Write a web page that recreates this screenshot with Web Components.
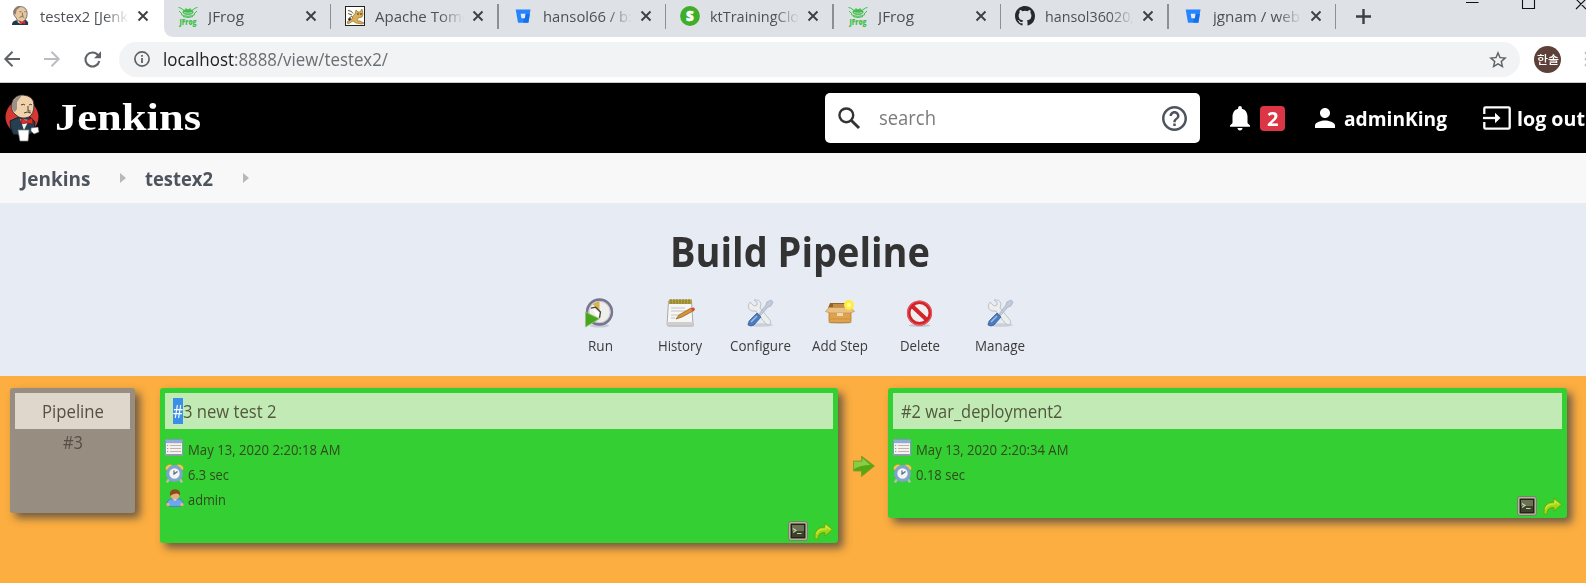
<!DOCTYPE html>
<html lang="en">
<head>
<meta charset="utf-8">
<title>testex2 [Jenkins]</title>
<style>
html,body{margin:0;height:583px;overflow:hidden;background:#fff;font-family:"Open Sans","Noto Sans CJK KR",sans-serif}
</style>
</head>
<body>
<build-page></build-page>
<script>
const ICONS = {
  jenkinsSmall: '<svg viewBox="0 0 19 21"><path d="M1 20q0-5 6-5l6-1q6 1 5 6z" fill="#1d3a48"/><path d="M7 14l6 0 0 3-3 2-3-2z" fill="#eee"/><path d="M3 5Q5 0 10 .5 17 1 17 8q0 7-6 9Q6 16 5 12 2 10 3 5z" fill="#e8c7a0" stroke="#555" stroke-width=".8"/><path d="M3 4.500q3-5 7-3.500L6 4 5 9 3 8z" fill="#8c7c6e"/><path d="M9 6h2M14 6h1.500M12 7v3h1M9 12q3-2 5 0" stroke="#555" fill="none" stroke-width=".8"/><path d="M9 15l3 2 3-2v4l-3-1-3 1z" fill="#e02c26"/></svg>',
  frog: '<svg viewBox="0 0 20 20" fill="none" stroke="#3fbf49" stroke-width="1"><path d="M.500 1.500l2 .500L7 5M19.500 1.500l-2 .500L13 5M1 5l3 3M19 5l-3 3M8 2v2M12 2v2"/><path d="M3 8.500q7 3.500 14 0M5 10.500q5 2 10 0"/><ellipse cx="10" cy="6" rx="5" ry="2.300" fill="#3fbf49"/><path d="M6 6.500q4 1.500 8 0" stroke="#dee1e6" stroke-width=".700"/><text x="1.500" y="18.500" font-family="Open Sans,sans-serif" font-weight="800" font-size="9" textLength="17" lengthAdjust="spacingAndGlyphs" fill="#3fbf49" stroke="none">JFrog</text></svg>',
  tomcat: '<svg viewBox="0 0 20 20"><rect x=".5" y=".5" width="19" height="19" fill="#fffef4" stroke="#222"/><path d="M3 4.500q4 0 5 3M3 7.500l4 1.500M3.500 12.500l3-2 2 1.500" fill="none" stroke="#444" stroke-width=".9"/><path d="M2 16l5-3q0-3 3-5l1-4 2 2h2l2-3 1 5-1 3-4 1q-2 3 2 3l4 2-2 1-6-1-3-2-5 3z" fill="#dcae55" stroke="#80602a" stroke-width=".6"/><path d="M3 13l2-1 1.500 1L4 15z" fill="#222"/><circle cx="13" cy="8" r=".7"/><circle cx="16" cy="8" r=".7"/></svg>',
  bucket: '<svg viewBox="0 0 20 20"><path d="M2.700 3.500h14.800l-2.100 13.200H5z" fill="#2684ff"/><path d="M12 8h5l-1.600 8.700H10z" fill="#0f62dd" opacity=".65"/><path d="M7.700 7.700h4.800l-.6 4.500H8.400z" fill="#e4eaf3"/></svg>',
  s: '<svg viewBox="0 0 20 20"><circle cx="10" cy="10" r="9.900" fill="#3fae29"/><text x="10" y="14.800" text-anchor="middle" font-family="Open Sans,sans-serif" font-weight="800" font-size="13.500" fill="#fff" stroke="#fff" stroke-width=".5">S</text></svg>',
  github: '<svg viewBox="0 0 16 16"><path fill="#24292e" d="M8 0C3.580 0 0 3.580 0 8c0 3.540 2.290 6.530 5.470 7.590.4.070.55-.17.55-.38 0-.19-.01-.82-.01-1.490-2.010.37-2.530-.49-2.690-.94-.09-.23-.48-.94-.82-1.130-.28-.15-.68-.52-.01-.53.63-.01 1.080.58 1.230.82.72 1.210 1.870.87 2.330.66.07-.52.28-.87.51-1.070-1.780-.2-3.640-.89-3.640-3.950 0-.87.31-1.590.82-2.150-.08-.2-.36-1.020.08-2.120 0 0 .67-.21 2.200.82a7.600 7.600 0 0 1 4 0c1.530-1.040 2.200-.82 2.200-.82.44 1.100.16 1.920.08 2.120.51.56.82 1.270.82 2.150 0 3.070-1.870 3.750-3.650 3.950.29.25.54.73.54 1.480 0 1.070-.01 1.930-.01 2.200 0 .21.15.46.55.38A8 8 0 0 0 16 8c0-4.420-3.580-8-8-8z"/></svg>',
  close: '<svg viewBox="0 0 10 10"><path d="M.5.5l9 9M9.500.5L.5 9.500" stroke="#3c4043" stroke-width="1.900"/></svg>',
  plus: '<svg viewBox="0 0 15 15"><path d="M7.500 0v15M0 7.500h15" stroke="#3c4043" stroke-width="2.400"/></svg>',
  windows: '<svg viewBox="0 0 120 12"><path d="M0 2.500h12.500M56.500-3v11.500h12V-3M110 9l10-10M110-1l10 10" stroke="#111" stroke-width="1.100" fill="none"/></svg>',
  back: '<svg viewBox="0 0 16 16" fill="none" stroke="currentColor" stroke-width="2"><path d="M16 8H1.500M8.500.8L1.300 8l7.200 7.200"/></svg>',
  fwd: '<svg viewBox="0 0 16 16" fill="none" stroke="currentColor" stroke-width="2"><path d="M0 8h14.500M7.500.8L14.700 8l-7.200 7.200"/></svg>',
  reload: '<svg viewBox="0 0 17 17"><path d="M14 4.200A7 7 0 1 0 15.300 10" fill="none" stroke="#5f6368" stroke-width="2.100"/><path d="M17 .3v7h-7z" fill="#5f6368"/></svg>',
  info: '<svg viewBox="0 0 16 16"><circle cx="8" cy="8" r="7.100" fill="none" stroke="#5f6368" stroke-width="1.700"/><path d="M8 7v5M8 4v1.800" stroke="#5f6368" stroke-width="1.800"/></svg>',
  star: '<svg viewBox="2 2 20 19"><path fill="#5f6368" d="M22 9.240l-7.190-.62L12 2 9.190 8.630 2 9.240l5.460 4.730L5.820 21 12 17.270 18.180 21l-1.630-7.030L22 9.240zM12 15.400l-3.760 2.270 1-4.280-3.320-2.880 4.380-.38L12 6.100l1.710 4.040 4.380.38-3.320 2.880 1 4.280L12 15.400z"/></svg>',
  dots: '<svg viewBox="0 0 2 16" fill="#c4c6c8"><circle cx="2" cy="2" r="1.500"/><circle cx="2" cy="8" r="1.500"/><circle cx="2" cy="14" r="1.500"/></svg>',
  jenkins: '<svg viewBox="0 0 34 48"><circle cx="17" cy="23" r="16.500" fill="#d33833"/><path d="M5 27l9-4 11 0 5 5-1 10q-9 5-21 2Q5 34 5 27z" fill="#243f50" stroke="#101d24"/><path d="M15 25l4 11 5-10z" fill="#f4f4f4"/><path d="M7 9Q9 1 18 1q11 1 11 10 0 9-5 12-8 3-13-2Q5 17 7 9z" fill="#efd2ac" stroke="#3b322c" stroke-width=".9"/><path d="M7 10Q9 3 17 1l-5 7v7l-2 3Q6 15 7 10z" fill="#9a9088"/><path d="M16 11q2.500-1.500 4 0M24 11q2-1.500 3 0M23 12v5h2.500M19 19q3-2 7 0" fill="none" stroke="#4b3d33" stroke-width="1"/><path d="M16 24l5 3 6-3 1 6-6-1-6 1z" fill="#e02b26" stroke="#6c1210" stroke-width=".6"/><path d="M13 36l11 0-1 11h-8z" fill="#fff" stroke="#888" stroke-width=".7"/><path d="M26 34l7-1 1 5-5 2-3-3z" fill="#fff" stroke="#666" stroke-width=".6"/></svg>',
  search: '<svg viewBox="0 0 23 23" fill="none" stroke="#333"><circle cx="8.700" cy="8.700" r="7.200" stroke-width="2.500"/><path d="M14 14l8 8" stroke-width="3"/></svg>',
  help: '<svg viewBox="2 2 20 20"><path fill="#4d545d" d="M11 18h2v-2h-2v2zm1-16C6.480 2 2 6.480 2 12s4.480 10 10 10 10-4.480 10-10S17.520 2 12 2zm0 18c-4.410 0-8-3.590-8-8s3.590-8 8-8 8 3.590 8 8-3.590 8-8 8zm0-14c-2.210 0-4 1.790-4 4h2c0-1.100.9-2 2-2s2 .9 2 2c0 2-3 1.750-3 5h2c0-2.250 3-2.500 3-5 0-2.210-1.790-4-4-4z"/></svg>',
  bell: '<svg viewBox="4 2.500 16 19.500"><path fill="#fff" d="M12 22c1.100 0 2-.9 2-2h-4c0 1.100.89 2 2 2zm6-6v-5c0-3.070-1.640-5.640-4.500-6.320V4c0-.83-.67-1.500-1.500-1.500s-1.500.67-1.500 1.500v.68C7.630 5.360 6 7.920 6 11v5l-2 2v1h16v-1l-2-2z"/></svg>',
  person: '<svg viewBox="4 4 16 16"><path fill="#fff" d="M12 12c2.210 0 4-1.790 4-4s-1.790-4-4-4-4 1.790-4 4 1.790 4 4 4zm0 2c-2.670 0-8 1.340-8 4v2h16v-2c0-2.660-5.330-4-8-4z"/></svg>',
  logout: '<svg viewBox="0 0 28 24"><path d="M1.300 8V2.500q0-1.200 1.200-1.200h23q1.200 0 1.200 1.200v19q0 1.200-1.200 1.200h-23q-1.200 0-1.200-1.200V16" fill="none" stroke="#fff" stroke-width="2.300"/><path d="M0 12h13" stroke="#fff" stroke-width="2.300"/><path d="M12 6.700l5.500 5.300-5.500 5.300z" fill="#fff"/></svg>',
  run: '<svg viewBox="0 0 30 30"><ellipse cx="15" cy="28" rx="10" ry="2" fill="#8a8f99" opacity=".35"/><circle cx="15" cy="14" r="12.800" fill="#eeeeea" stroke="#77758f" stroke-width="2.700"/><circle cx="15" cy="14" r="11" fill="none" stroke="#c5c4d2"/><path d="M15 13L8 6q3-3 7-3z" fill="#d7b44d"/><path d="M7 10l7 4 2 6-4-2z" fill="#fff"/><path d="M6 10l5-1 5 5-1 6" stroke="#444" stroke-width="1.400" fill="none"/><path d="M.500 14L15 21 .500 29.500z" fill="#48a51e" stroke="#9ac57a" stroke-width=".8"/></svg>',
  history: '<svg viewBox="0 0 29 29"><rect x="1" y="24" width="27" height="4" rx="2" fill="#777" opacity=".3"/><path d="M2.500 2h23l1.500 24H1z" fill="#f6f6f4" stroke="#aaa"/><path d="M1.500 23h25l.5 3.500H1z" fill="#cfcfcd"/><path d="M3 .5h23v4.500H3z" fill="#b3a044"/><path d="M5 0v5M8 0v5M11 0v5M14 0v5M17 0v5M20 0v5M23 0v5" stroke="#8b7a28"/><path d="M5 9h14M5 12h15M5 16h9M5 19h4" stroke="#c3c3c3"/><path d="M10 20l3-4L25 9l2 3-11 6z" fill="#d99335" stroke="#8d5a1d" stroke-width=".7"/><path d="M25 9l3-.5 1 2-1.500 2z" fill="#d8453b"/></svg>',
  tools: '<svg viewBox="0 0 28 28"><ellipse cx="15" cy="26" rx="12" ry="1.800" fill="#778" opacity=".25"/><path d="M4 3l4 4 3-1V3L8 1q6-1 7 4l-1 4 10 12q2 4-2 5l-3-2L10 12Q3 13 2 7z" fill="#eceeee" stroke="#b2b6ba" stroke-width=".8"/><path d="M13 15l7-9 1-3 4-2 2 2-2 4-3 1-8 9z" fill="#c0ccda" stroke="#9dabbd" stroke-width=".7"/><path d="M11 14l4 4-7 8q-3 2-6 0 0-3 2-5z" fill="#4b7abd" stroke="#37609c" stroke-width=".8"/><path d="M11 17l-6 6" stroke="#a4bfe3" stroke-width="1.400"/></svg>',
  box: '<svg viewBox="0 0 30 24"><ellipse cx="15" cy="22.500" rx="12" ry="1.400" fill="#666" opacity=".3"/><path d="M5 3h18l3 5H3z" fill="#936329"/><path d="M8 4h15v4H8z" fill="#c29049"/><path d="M4 8h22v13q0 1.500-2 1.500H6q-2 0-2-1.500z" fill="#dfa24d" stroke="#b77b29" stroke-width=".8"/><path d="M4 7.500L.5 11.500l4.500 1.500h20l4.500-1.500-3.500-4z" fill="#eac184" stroke="#c38c40" stroke-width=".6"/><path d="M12 13h6v3h-6z" fill="#f1dab2"/><path d="M5 19h20" stroke="#cb9244"/><circle cx="24" cy="5" r="5" fill="#ffed37"/><circle cx="24" cy="5" r="2.300" fill="#fff99e"/></svg>',
  del: '<svg viewBox="0 0 27 27"><ellipse cx="13.500" cy="25.500" rx="11" ry="1.500" fill="#555" opacity=".25"/><circle cx="13.500" cy="13" r="10.800" fill="#f1eeee" stroke="#d3242c" stroke-width="3.600"/><path d="M6 6l15 14" stroke="#d3242c" stroke-width="4"/><circle cx="13.500" cy="13" r="12" fill="none" stroke="#ef7b80" stroke-width=".7"/></svg>',
  list: '<svg viewBox="0 0 18 17"><rect x=".5" y=".5" width="17" height="16" rx="1" fill="#f6f2ee" stroke="#8398bf"/><path d="M1 1h16v3.200H1z" fill="#8fabd8"/><path d="M5 6.500h11M5 9.500h11M5 12.500h11" stroke="#c0b4aa"/><path d="M2 6.500h1.300M2 9.500h1.300M2 12.500h1.300" stroke="#7d9bc9"/><path d="M1 15.500h16" stroke="#9a9a9d"/></svg>',
  clock: '<svg viewBox="0 0 19 19"><path d="M.5 5Q.5 .5 6 .5L8 2 3 7zM18.500 5Q18.500 .5 13 .5L11 2l5 5z" fill="#f1cc50" stroke="#c39728" stroke-width=".4"/><path d="M4 15l-2 3.500M15 15l2 3.500" stroke="#b6bfb9" stroke-width="2.500"/><circle cx="9.500" cy="9.500" r="6.800" fill="#f2f5f6" stroke="#7fa3cd" stroke-width="3.200"/><path d="M9 6.500v3.500l3.500-2.500" fill="none" stroke="#5a6470" stroke-width="1.200"/></svg>',
  user: '<svg viewBox="0 0 18 18"><path d="M.5 16q0-5 4-6h9q4 1 4 6l-4 1.500h-9z" fill="#6ba6ee" stroke="#3d76c2" stroke-width=".7"/><circle cx="2" cy="15.500" r="1.700" fill="#efb08a"/><circle cx="16" cy="15.500" r="1.700" fill="#efb08a"/><path d="M7 10h4l-2 2z" fill="#dfeefe"/><ellipse cx="9" cy="6.300" rx="4.500" ry="4.300" fill="#e9ae80"/><path d="M4 7Q3 .5 9 .3 15 .5 14 7q-1-3-4-2.500Q6 5 4 7z" fill="#8c4c19"/></svg>',
  console: '<svg viewBox="0 0 20 20"><rect x=".7" y=".7" width="18.600" height="18.600" rx="2" fill="#c4bfb2" stroke="#7a7568"/><rect x="2.500" y="2.500" width="15" height="15" fill="#23240f"/><path d="M4 4h12v6H4z" fill="#6b7355"/><path d="M4 10h12v6H4z" fill="#3d422a"/><path d="M5 7.500l3 2L5 11.500M9 12.500h4.500" fill="none" stroke="#c9ccba" stroke-width="1.200"/></svg>',
  redo: '<svg viewBox="0 0 19 18"><path d="M1 17Q-.5 5 11 5V1l7.500 6.500L11 14v-3.500Q4 10 4 17z" fill="#a4d613" stroke="#62a80f" stroke-width=".9"/><path d="M2.500 12Q4 7 12 7V4l4 3.500" fill="none" stroke="#cfe84a" stroke-width="1.200"/></svg>',
  arrow: '<svg viewBox="0 0 22 22"><path d="M.500 6h8V1L21.500 11 8.500 21.500V16h-8z" fill="#57a711" stroke="#7f9b28" stroke-width=".8"/><path d="M1 6.500h8.300V3l8 7Q8 10 1 14z" fill="#8acb48"/></svg>',
  crumb: '<svg viewBox="0 0 6 10"><path d="M0 0l6 5-6 5z" fill="#b8b8b8"/></svg>'
};

function define(name, html, setup) {
  const t = document.createElement('template');
  t.innerHTML = html;
  customElements.define(name, class extends HTMLElement {
    connectedCallback() {
      if (this.shadowRoot) return;
      this.attachShadow({mode: 'open'}).append(t.content.cloneNode(true));
      if (setup) setup(this, this.shadowRoot);
    }
  });
}

/* Icon from the sheet above, sized by its w and h attributes. */
define('ui-icon', '<style>:host{display:block;flex:none}svg{display:block;width:100%;height:100%;overflow:visible}</style><div></div>', (el, r) => {
  el.style.width = el.getAttribute('w') + 'px';
  el.style.height = (el.getAttribute('h') || el.getAttribute('w')) + 'px';
  const d = r.querySelector('div');
  d.style.height = '100%';
  d.innerHTML = ICONS[el.getAttribute('name')];
});

/* One line of text condensed or widened to an exact advance width. */
define('fit-text', '<style>:host{display:block;flex:none;white-space:pre}span{display:inline-block;transform-origin:0 50%;vertical-align:top}</style><span><slot></slot></span>', (el, r) => {
  const s = r.querySelector('span'), w = +el.getAttribute('w');
  const natural = s.getBoundingClientRect().width;
  el.style.width = w + 'px';
  if (natural) s.style.transform = `scaleX(${w / natural})`;
});

define('browser-tab', `<style>
:host{display:flex;align-items:center;box-sizing:border-box;flex:none;width:167.500px;height:32px;padding-left:14px;color:#4d5155;font-size:15px;line-height:31px}
.i{width:20px;margin-right:10px}
.t{width:89px;overflow:hidden;-webkit-mask-image:linear-gradient(90deg,#000 72%,transparent 100%);mask-image:linear-gradient(90deg,#000 72%,transparent 100%)}
.x{margin-left:9px}
.s{width:1.500px;height:25px;background:#8c8f94;margin-left:auto;flex:none}
:host([active]) .s{display:none}
</style><div class="i"><ui-icon></ui-icon></div><div class="t"><slot></slot></div><ui-icon class="x" name="close" w="10"></ui-icon><div class="s"></div>`, (el, r) => {
  const i = document.createElement('ui-icon');
  i.setAttribute('name', el.getAttribute('icon'));
  i.setAttribute('w', 20);
  r.querySelector('.i').replaceChildren(i);
});

define('browser-chrome', `<style>
:host{display:block;height:83px;box-sizing:border-box;border-bottom:1px solid #c9cbce;background:#fff}
.tabs{height:37px;background:#dee1e6;overflow:hidden;display:flex;align-items:flex-start}
.first{flex:none;width:163.500px;height:37px;background:#fff}
.first browser-tab{margin-left:-4px}
.wrap{display:flex;background:#fff}
.strip{display:flex;flex:none;width:1422.500px;height:37px;background:#dee1e6;border-bottom-left-radius:9px}
.plus{margin:8.500px 0 0 20px}
.win{margin:0 0 0 95px}
.bar{display:flex;align-items:center;height:44px;padding-left:3.500px}
.omni{box-sizing:border-box;display:flex;align-items:center;width:1401px;height:35px;margin-left:18.500px;border-radius:18px;background:#f1f3f4;padding:0 13px 0 14.500px;color:#6b6f73;font-size:18px;line-height:35px}
.url{display:flex;margin-left:13px;flex:1}
.av{display:flex;justify-content:center;align-items:center;width:27px;height:27px;border-radius:50%;background:#5d4037;color:#fff;margin:0 23px 0 14px;font:500 11.500px/27px "Noto Sans CJK KR",sans-serif}
</style>
<div class="tabs"><div class="first"><browser-tab active icon="jenkinsSmall"><fit-text w="88">testex2 [Jenk</fit-text></browser-tab></div>
<div class="wrap"><div class="strip">
<browser-tab icon="frog"><fit-text w="36">JFrog</fit-text></browser-tab>
<browser-tab icon="tomcat"><fit-text w="94">Apache Tomc</fit-text></browser-tab>
<browser-tab icon="bucket"><fit-text w="89">hansol66 / b:</fit-text></browser-tab>
<browser-tab icon="s"><fit-text w="89">ktTrainingClo</fit-text></browser-tab>
<browser-tab icon="frog"><fit-text w="36">JFrog</fit-text></browser-tab>
<browser-tab icon="github"><fit-text w="89">hansol36020,</fit-text></browser-tab>
<browser-tab icon="bucket"><fit-text w="87">jgnam / web</fit-text></browser-tab>
<ui-icon class="plus" name="plus" w="15"></ui-icon><ui-icon class="win" name="windows" w="120" h="12"></ui-icon>
</div></div></div>
<div class="bar"><ui-icon name="back" w="16" style="color:#5f6368"></ui-icon><ui-icon name="fwd" w="16" style="color:#bbbdc0;margin-left:24.500px"></ui-icon><ui-icon name="reload" w="17" style="margin-left:23.500px"></ui-icon>
<div class="omni"><ui-icon name="info" w="16"></ui-icon><div class="url"><fit-text w="71" style="color:#202124">localhost</fit-text><fit-text w="154">:8888/view/testex2/</fit-text></div><ui-icon name="star" w="18" h="17"></ui-icon></div>
<div class="av"><fit-text w="22">한솔</fit-text></div><ui-icon name="dots" w="2" h="16"></ui-icon></div>`);

define('page-header', `<style>
:host{display:flex;align-items:center;height:70px;background:#000;color:#fff;font-weight:700;font-size:20px;line-height:38px}
.brand{font:700 37px/40px "Liberation Serif",serif;margin:-1px 0 0 16px}
.search{display:flex;align-items:center;box-sizing:border-box;width:375px;height:50px;margin-left:624px;padding:0 13px 0 13px;border-radius:5px;background:#fff;color:#7b7b7b;font-weight:400;font-size:19.500px}
.badge{display:flex;justify-content:center;width:25px;height:25px;line-height:25px;border-radius:4px;background:#dc3545;margin-left:10px}
</style>
<ui-icon name="jenkins" w="34" h="48" style="margin-left:5px"></ui-icon><fit-text class="brand" w="146">Jenkins</fit-text>
<div class="search"><ui-icon name="search" w="22"></ui-icon><fit-text w="57" style="margin-left:18.500px">search</fit-text><ui-icon name="help" w="25" style="margin-left:auto"></ui-icon></div>
<ui-icon name="bell" w="20" h="24.500" style="margin-left:30px"></ui-icon><div class="badge"><fit-text w="11.500">2</fit-text></div>
<ui-icon name="person" w="20" style="margin-left:30px"></ui-icon><fit-text w="103" style="margin-left:8.500px;padding-top:1px">adminKing</fit-text>
<ui-icon name="logout" w="28" h="24" style="margin-left:36.500px"></ui-icon><fit-text w="68" style="margin-left:6px;padding-top:1px">log out</fit-text>`);

define('crumb-bar', `<style>
:host{display:flex;align-items:center;height:50px;background:#f8f8f8;color:#4d545d;font-weight:700;font-size:20px;line-height:50px}
fit-text{padding-top:2px}
</style><fit-text w="69.500" style="margin-left:20.500px">Jenkins</fit-text><ui-icon name="crumb" w="6" h="10" style="margin-left:30px"></ui-icon><fit-text w="68" style="margin-left:19px">testex2</fit-text><ui-icon name="crumb" w="6" h="10" style="margin-left:30px"></ui-icon>`);

define('tool-button', `<style>
:host{display:flex;flex-direction:column;align-items:center;width:80px;flex:none;color:#3b3b3b;font-size:14px;line-height:20px}
.i{height:38px;display:flex;align-items:center;margin-bottom:4px}
</style><div class="i"><slot name="icon"></slot></div><slot></slot>`);

define('pipeline-head', `<style>
:host{display:flex;flex-direction:column;align-items:center;box-sizing:border-box;height:173px;background:#e7ecf4;padding-top:29px}
.h{font-size:40.500px;font-weight:700;line-height:40px;color:#333}
.row{display:flex;margin-top:22px}
</style><fit-text class="h" w="260" style="margin-left:14px">Build Pipeline</fit-text>
<div class="row" style="margin-left:14px">
<tool-button><ui-icon slot="icon" name="run" w="29" h="30" style="margin-right:1px"></ui-icon><fit-text w="25">Run</fit-text></tool-button>
<tool-button><ui-icon slot="icon" name="history" w="29"></ui-icon><fit-text w="44">History</fit-text></tool-button>
<tool-button><ui-icon slot="icon" name="tools" w="28"></ui-icon><fit-text w="61">Configure</fit-text></tool-button>
<tool-button><ui-icon slot="icon" name="box" w="30" h="24" style="margin-top:-2px"></ui-icon><fit-text w="56">Add Step</fit-text></tool-button>
<tool-button><ui-icon slot="icon" name="del" w="27" style="margin-right:1px"></ui-icon><fit-text w="40">Delete</fit-text></tool-button>
<tool-button><ui-icon slot="icon" name="tools" w="28"></ui-icon><fit-text w="50">Manage</fit-text></tool-button>
</div>`);

define('info-row', `<style>
:host{display:flex;align-items:center;height:25px;line-height:27px;font-size:14px;color:#33491f}
.i{width:22.500px}
</style><div class="i"><slot name="icon"></slot></div><slot></slot>`);

define('build-card', `<style>
:host{display:flex;flex-direction:column;box-sizing:border-box;border-radius:3px;border:5px solid #33cf33;background:#33cf33;box-shadow:5px 5px 8px rgba(65,62,65,.75);flex:none}
.t{display:flex;align-items:center;height:36px;padding-left:8px;background:#c2eab4;color:#52583f;font-size:18px;line-height:26px}
.b{margin-top:8px;flex:1}
.f{display:flex;align-items:center;justify-content:flex-end;gap:6px;margin:0 0 -3px 0}
</style><div class="t"><slot name="title"></slot></div><div class="b"><slot></slot></div><div class="f"><ui-icon name="console" w="20"></ui-icon><ui-icon name="redo" w="19" h="18"></ui-icon></div>`);

define('pipeline-stage', `<style>
:host{display:flex;align-items:flex-start;box-sizing:border-box;height:207px;background:#fcae40;padding:12px 0 0 10px}
.p{box-sizing:border-box;display:flex;flex-direction:column;align-items:center;width:125px;height:125px;border:5px solid #978d80;border-radius:3px;background:#978d80;box-shadow:5px 5px 8px rgba(65,62,65,.75);color:#574e45;font-size:18px;line-height:26px;margin-right:25px;flex:none}
.pt{display:flex;justify-content:center;width:115px;height:36px;line-height:36px;background:#dfd7cb}
.sel{background:#3a8fe8;color:#fff}
.list{margin-top:-4px}
</style>
<div class="p"><div class="pt"><fit-text w="62">Pipeline</fit-text></div><fit-text w="20">#3</fit-text></div>
<build-card style="width:678px;height:155px"><fit-text slot="title" class="sel" w="10">#</fit-text><fit-text slot="title" w="93.500">3 new test 2</fit-text>
<info-row><ui-icon slot="icon" class="list" name="list" w="18" h="17"></ui-icon><fit-text w="152.500">May 13, 2020 2:20:18 AM</fit-text></info-row>
<info-row><ui-icon slot="icon" style="margin-top:-3px" name="clock" w="19"></ui-icon><fit-text w="41">6.3 sec</fit-text></info-row>
<info-row><ui-icon slot="icon" style="margin:-4px 0 0 1px" name="user" w="18"></ui-icon><fit-text w="38">admin</fit-text></info-row></build-card>
<ui-icon name="arrow" w="22" h="22" style="margin:67px 13px 0 15px"></ui-icon>
<build-card style="width:679px;height:130px"><fit-text slot="title" w="161.500">#2 war_deployment2</fit-text>
<info-row><ui-icon slot="icon" class="list" name="list" w="18" h="17"></ui-icon><fit-text w="152.500">May 13, 2020 2:20:34 AM</fit-text></info-row>
<info-row><ui-icon slot="icon" style="margin-top:-3px" name="clock" w="19"></ui-icon><fit-text w="49">0.18 sec</fit-text></info-row></build-card>`);

define('build-page', `<style>:host{display:block;width:1586px;height:583px;overflow:hidden}</style>
<browser-chrome></browser-chrome><page-header></page-header><crumb-bar></crumb-bar><pipeline-head></pipeline-head><pipeline-stage></pipeline-stage>`);
</script>
</body>
</html>
